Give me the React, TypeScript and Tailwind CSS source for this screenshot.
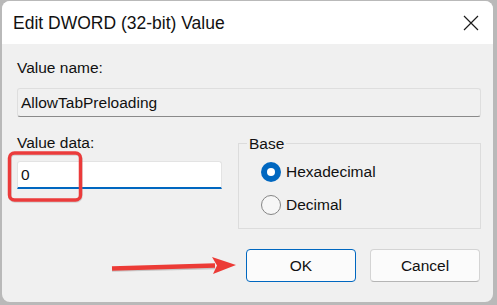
import React from 'react';

const font = { fontFamily: '"Liberation Sans", Arial, sans-serif' };

function CloseIcon() {
  return (
    <svg width="16" height="16" viewBox="0 0 16 16" fill="none">
      <path d="M1 1L15 15M15 1L1 15" stroke="#1b1b1b" strokeWidth={1.2} />
    </svg>
  );
}

function Radio({ checked, label }: { checked?: boolean; label: string }) {
  return (
    <div className="flex items-center gap-[5px]">
      {checked ? (
        <div className="w-[20px] h-[20px] rounded-full bg-[#0067c0] flex items-center justify-center">
          <div className="w-[8px] h-[8px] rounded-full bg-white" />
        </div>
      ) : (
        <div className="w-[20px] h-[20px] rounded-full border border-[#858585] bg-[#f6f6f6]" />
      )}
      <span className="leading-[18px]">{label}</span>
    </div>
  );
}

export default function App() {
  return (
    <div
      className="relative w-[497px] h-[305px] bg-[#b9b9b9] pl-[2px] pt-[1px] pr-[4px] pb-[3px] text-[15.5px] text-[#111]"
      style={font}
    >
      <div className="w-full h-full rounded-[8px] overflow-hidden bg-[#f0f0f0] flex flex-col">
        {/* Title bar */}
        <div className="h-[43px] bg-white flex items-center justify-between pl-[11px] pr-[14px]">
          <span className="text-[17.5px] leading-[20px] text-[#111]">Edit DWORD (32-bit) Value</span>
          <CloseIcon />
        </div>

        {/* Body */}
        <div className="flex-1 flex flex-col pl-[15px] pr-[12px]">
          <div className="mt-[15px] leading-[18px]">Value name:</div>
          <div className="mt-[11px] h-[29px] border border-[#dedede] border-b-[#8a8a8a] bg-[#f0f0f0] rounded-[3px] flex items-center pl-[3px]">
            AllowTabPreloading
          </div>

          <div className="mt-[17px] flex gap-[16px]">
            <div className="w-[205px] flex flex-col">
              <div className="leading-[18px]">Value data:</div>
              <div className="mt-[9px] h-[28px] bg-white border border-[#e3e3e3] border-b-2 border-b-[#0067c0] rounded-t-[3px] flex items-center pl-[3px]">
                0
              </div>
            </div>
            <div className="flex-1 mt-[9px] h-[86px] relative border border-[#dcdcdc] pl-[22px] pt-[18px] flex flex-col gap-[13px]">
              <span className="absolute -top-[9px] left-[8px] px-[2px] bg-[#f0f0f0] leading-[18px]">Base</span>
              <Radio checked label="Hexadecimal" />
              <Radio label="Decimal" />
            </div>
          </div>

          <div className="mt-[20px] flex justify-end gap-[14px] pr-[1px]">
            <button className="w-[110px] h-[33px] rounded-[4px] border border-[#0067c0] bg-[#fbfbfb] leading-none">
              OK
            </button>
            <button className="w-[110px] h-[33px] rounded-[4px] border border-[#d4d4d4] border-b-[#b5b5b5] bg-[#fbfbfb] leading-none">
              Cancel
            </button>
          </div>
        </div>
      </div>

      {/* Annotation: highlight box */}
      <svg className="absolute left-0 top-0 pointer-events-none" width="497" height="305">
        <rect x="10" y="154" width="71" height="47" rx="5" fill="none" stroke="#9a9a9a" strokeOpacity="0.35" strokeWidth="3.5" />
        <rect x="9.5" y="153" width="71" height="47" rx="5" fill="none" stroke="#eb3b3b" strokeWidth="3.5" />
        <path d="M112 269.5L215 267" stroke="#8a8a8a" strokeOpacity="0.4" strokeWidth="4.5" />
        <path d="M112 268.5L215 265.5" stroke="#ec3b36" strokeWidth="4.5" />
        <path d="M236 265L212 257L217 265.5L213 274Z" fill="#ec3b36" />
      </svg>
    </div>
  );
}
